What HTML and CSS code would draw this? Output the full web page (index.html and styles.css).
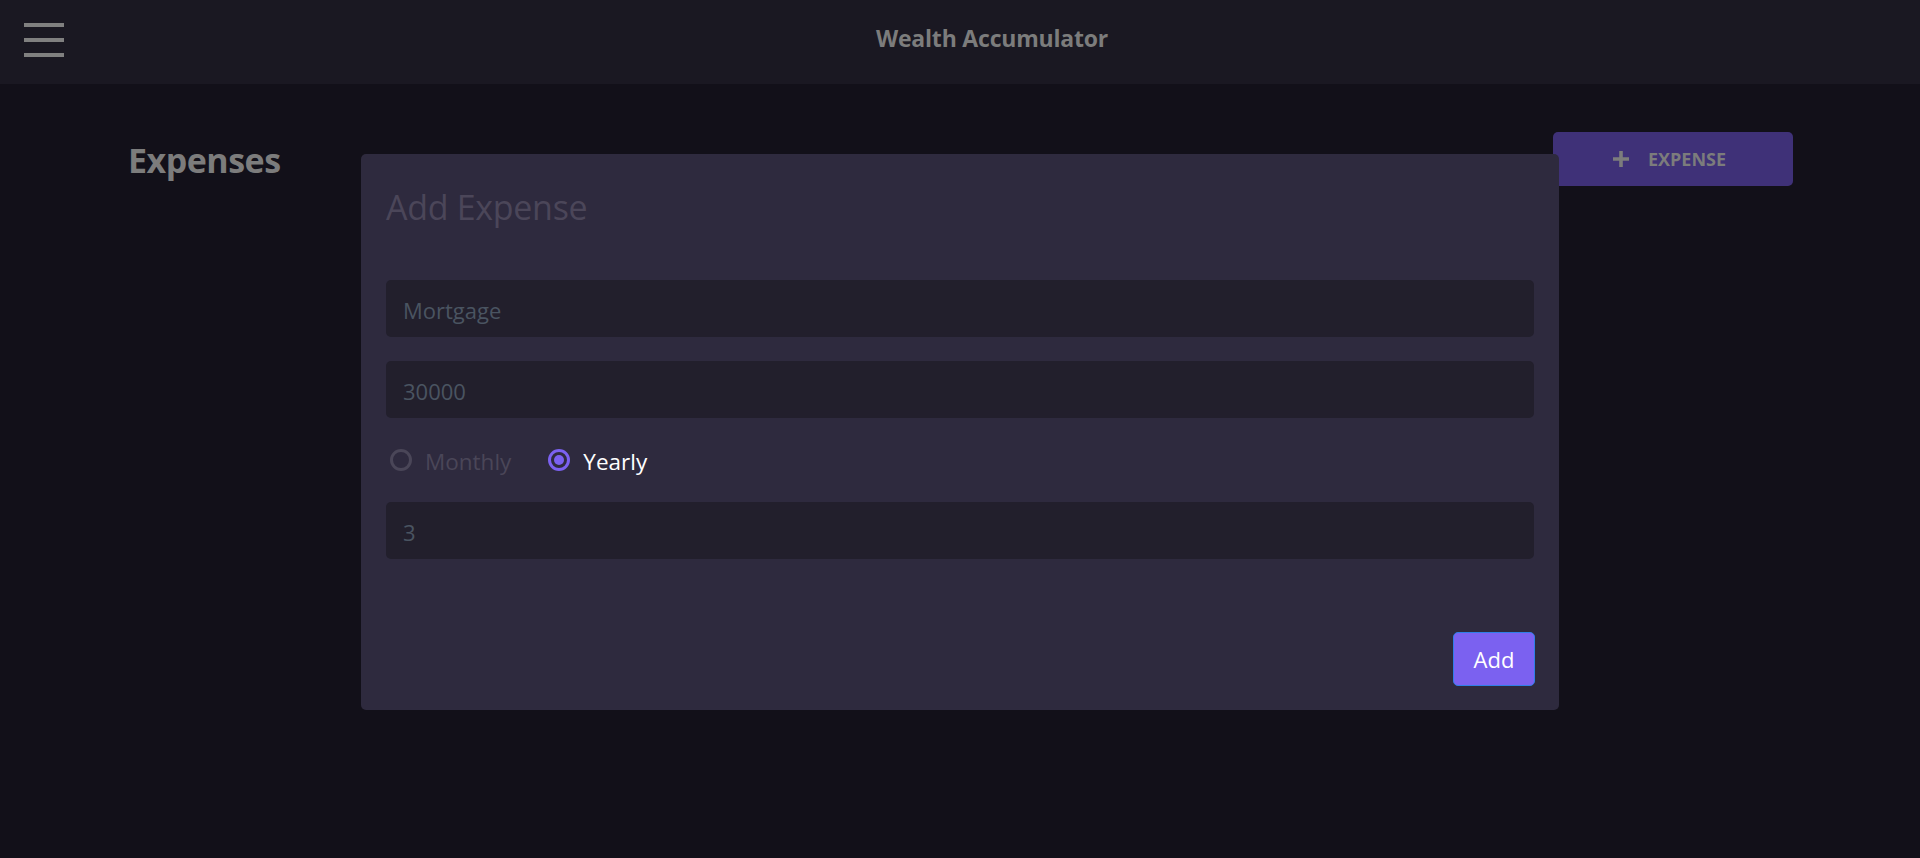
FILE: index.html
```html
<!DOCTYPE html>
<html lang="en">
<head>
<meta charset="utf-8">
<title>Wealth Accumulator</title>
<link rel="stylesheet" href="styles.css">
</head>
<body>
<header class="topbar">
  <button class="menu-btn" aria-label="Menu">
    <span class="bar"></span><span class="bar"></span><span class="bar"></span>
  </button>
  <div class="app-title">Wealth Accumulator</div>
</header>
<main class="page">
  <div class="page-head">
    <h2 class="page-title">Expenses</h2>
    <button class="add-expense-btn">
      <svg class="plus" width="18" height="18" viewBox="0 0 18 18"><path d="M9 1v16M1 9h16" stroke="#7c7c7c" stroke-width="3.6" fill="none"/></svg>
      <span>EXPENSE</span>
    </button>
  </div>
</main>
<div class="modal">
  <div class="modal-title">Add Expense</div>
  <div class="form">
    <div class="field">Mortgage</div>
    <div class="field">30000</div>
    <div class="radio-row">
      <label class="radio"><span class="dot"></span><span class="radio-label">Monthly</span></label>
      <label class="radio checked"><span class="dot"></span><span class="radio-label">Yearly</span></label>
    </div>
    <div class="field">3</div>
  </div>
  <div class="modal-foot">
    <button class="submit-btn">Add</button>
  </div>
</div>
</body>
</html>
```

FILE: styles.css
```css
* { box-sizing: border-box; }
html, body { margin: 0; padding: 0; }
body {
  background: #121019;
  font-family: "Open Sans", "Noto Sans", sans-serif;
  color: #7c7c7c;
  height: 858px;
  overflow: hidden;
}
.topbar {
  height: 84px;
  background: #1a1822;
  display: flex;
  align-items: flex-start;
}
.menu-btn {
  background: none;
  border: 0;
  padding: 0;
  margin: 23px 24px 0 24px;
  width: 40px;
  display: flex;
  flex-direction: column;
  gap: 11px;
}
.bar { display: block; width: 40px; height: 4px; background: #808080; }
.app-title {
  flex: 1;
  text-align: center;
  padding: 22px 24px 0 0;
  font-size: 23px;
  line-height: 32px;
  font-weight: 700;
  color: #7c7c7c;
  letter-spacing: -0.2px;
}
.page-head {
  display: flex;
  justify-content: space-between;
  align-items: flex-start;
  padding: 48px 127px 0 128px;
}
.page-title {
  margin: 6px 0 0 0;
  font-size: 34px;
  line-height: 44px;
  font-weight: 700;
  color: #7c7c7c;
  letter-spacing: -0.5px;
}
.add-expense-btn {
  width: 240px;
  height: 54px;
  background: #3f3178;
  border: 0;
  border-radius: 5px;
  display: flex;
  align-items: center;
  justify-content: center;
  gap: 18px;
  font-family: inherit;
  font-size: 18px;
  font-weight: 700;
  color: #7c7c7c;
  padding: 0 8px 0 0;
}
.plus { display: block; }
.modal {
  position: fixed;
  left: 361px;
  top: 154px;
  width: 1198px;
  height: 556px;
  background: #2e2a3e;
  border-radius: 5px;
  padding: 0 25px 24px 25px;
  display: flex;
  flex-direction: column;
}
.modal-title {
  margin-top: 29px;
  font-size: 34px;
  line-height: 48px;
  color: #4b4659;
  letter-spacing: -0.3px;
}
.form {
  margin-top: 49px;
  display: flex;
  flex-direction: column;
  gap: 24px;
}
.field {
  height: 57px;
  background: #221f2c;
  border-radius: 5px;
  padding: 3px 17px 0 17px;
  display: flex;
  align-items: center;
  font-size: 22px;
  color: #4a5461;
}
.radio-row {
  height: 36px;
  display: flex;
  align-items: center;
  gap: 37px;
  padding-left: 4px;
}
.radio { display: flex; align-items: center; gap: 13px; }
.dot {
  width: 22px;
  height: 22px;
  border-radius: 50%;
  border: 3px solid #4a4658;
  position: relative;
}
.radio.checked .dot { border-color: #7b61f0; }
.radio.checked .dot::after {
  content: "";
  position: absolute;
  left: 3px; top: 3px;
  width: 10px; height: 10px;
  border-radius: 50%;
  background: #7b61f0;
}
.radio-label { font-size: 22.5px; color: #4a4658; padding-top: 2px; }
.radio.checked .radio-label { color: #ffffff; }
.modal-foot {
  margin-top: auto;
  display: flex;
  justify-content: flex-end;
}
.submit-btn {
  width: 82px;
  height: 54px;
  margin-right: -1px;
  background: #7b61f0;
  border: 1.5px solid #2f7fe8;
  border-radius: 5px;
  color: #ffffff;
  font-family: inherit;
  font-size: 22px;
}
```
